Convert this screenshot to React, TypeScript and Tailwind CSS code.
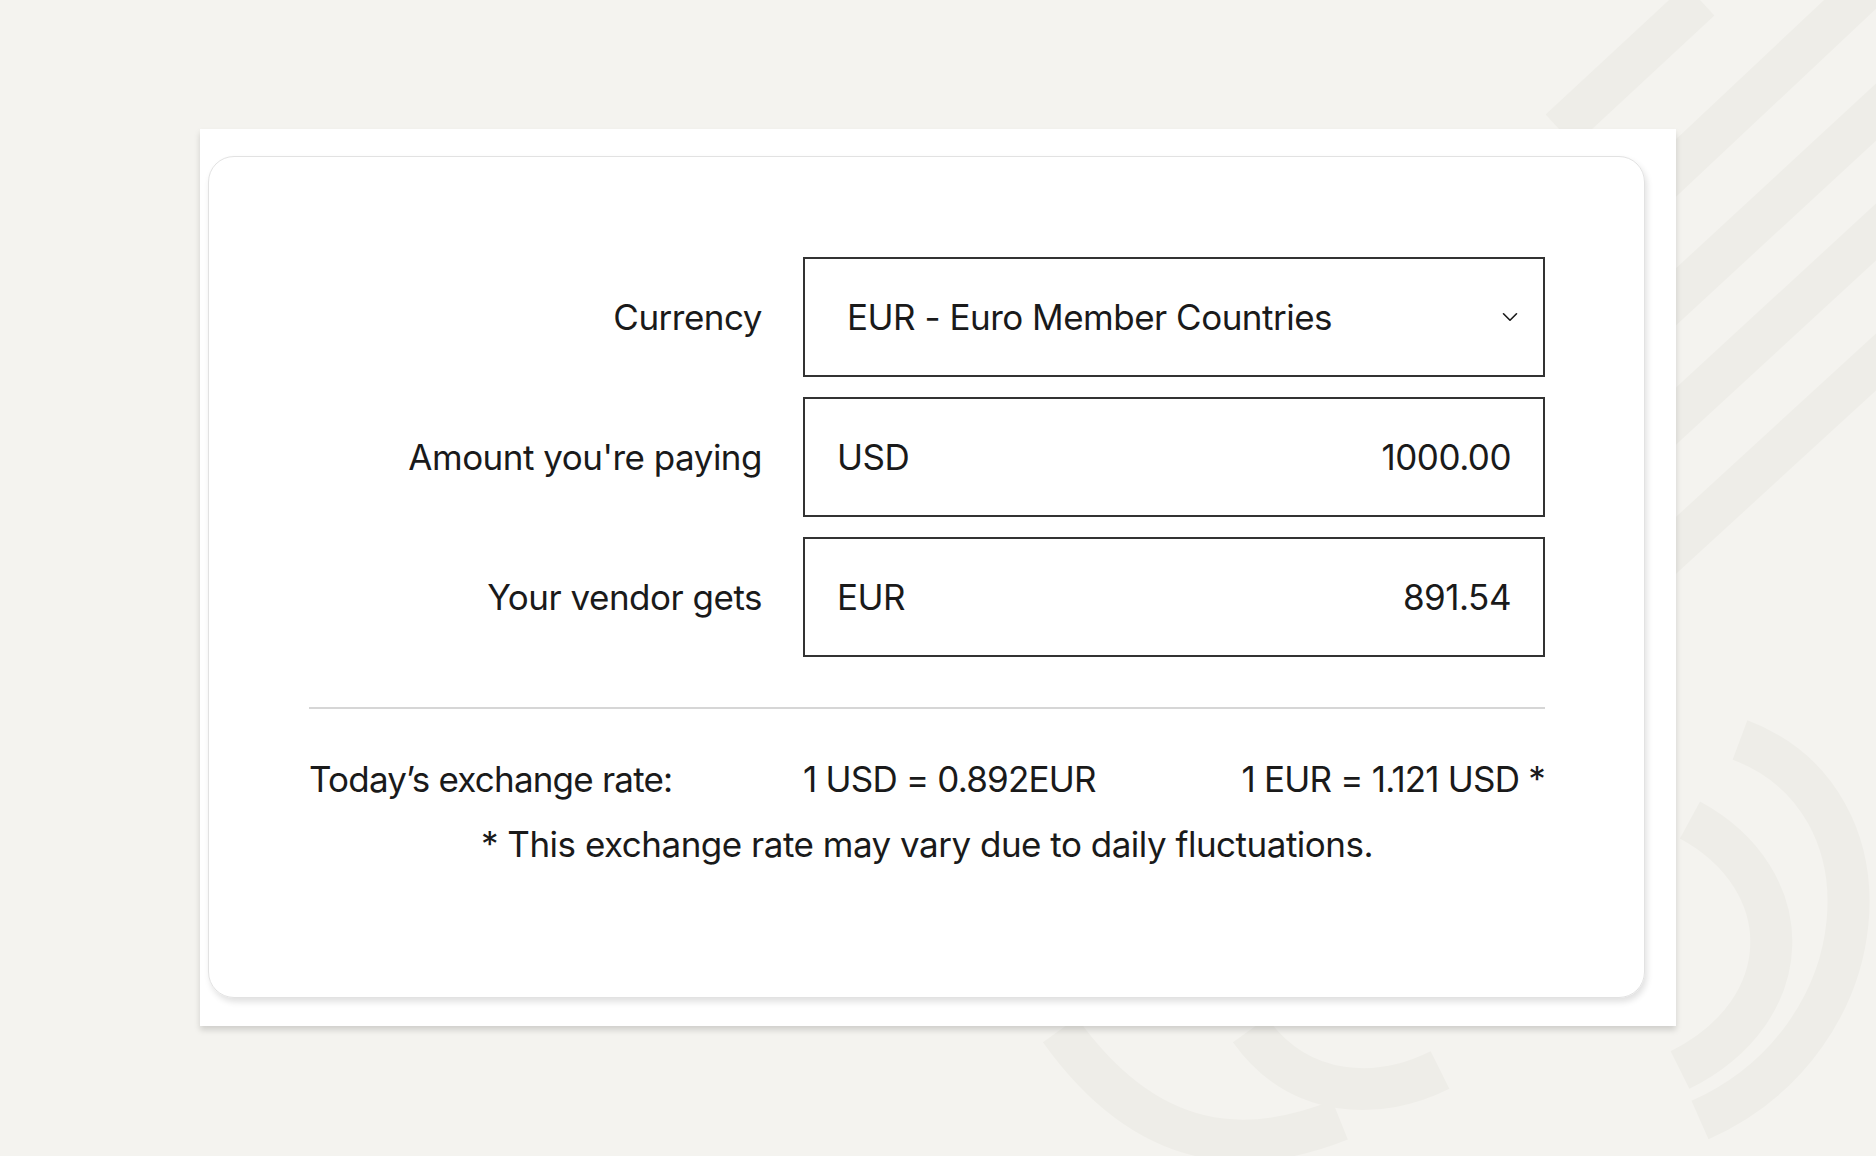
import { ChevronDown } from "lucide-react";

const rows = [
  { label: "Amount you're paying", code: "USD", value: "1000.00" },
  { label: "Your vendor gets", code: "EUR", value: "891.54" },
];

export default function App() {
  return (
    <div
      className="relative w-[1876px] h-[1156px] overflow-hidden bg-[#f4f3ef] text-[#1a1a1a]"
      style={{ fontFamily: "Inter, 'Liberation Sans', sans-serif" }}
    >
      {/* Decorative background stripes */}
      <svg className="absolute inset-0" width="1876" height="1156" viewBox="0 0 1876 1156">
        <g stroke="#eeede8" strokeWidth="42" fill="none">
          <path d="M1560 130 L1700 0" />
          <path d="M1610 230 L1876 -20" />
          <path d="M1640 330 L1900 90" />
          <path d="M1650 440 L1900 210" />
          <path d="M1660 560 L1900 340" />
          <path d="M1740 740 C1900 800 1880 1040 1700 1120" />
          <path d="M1690 820 C1800 880 1800 1010 1680 1070" />
          <path d="M1060 1030 C1150 1156 1250 1156 1340 1120" />
          <path d="M1250 1030 C1300 1100 1380 1100 1440 1070" />
        </g>
      </svg>

      <div className="relative pt-[129px] pl-[200px]">
        <div className="w-[1476px] h-[897px] bg-white shadow-[0_4px_6px_rgba(0,0,0,0.15)] pt-[27px] pl-[8px]">
          <div className="w-[1437px] h-[842px] rounded-[26px] border border-[#e2e2e2] shadow-[2px_4px_6px_rgba(0,0,0,0.12)] pt-[100px] pl-[100px] pr-[99px]">
            <div className="flex flex-col gap-[20px] tracking-[-0.5px]">
              <div className="flex items-center">
                <div className="w-[494px] text-right text-[35px] pr-[41px]">Currency</div>
                <div className="w-[742px] h-[120px] border-2 border-[#333] flex items-center justify-between pl-[42px] pr-[20px] text-[35px]">
                  <span>EUR - Euro Member Countries</span>
                  <ChevronDown className="w-[26px] h-[26px]" strokeWidth={1.5} />
                </div>
              </div>
              {rows.map((r) => (
                <div key={r.code} className="flex items-center">
                  <div className="w-[494px] text-right text-[35px] pr-[41px]">{r.label}</div>
                  <div className="w-[742px] h-[120px] border-2 border-[#333] flex items-center justify-between pl-[32px] pr-[32px] text-[35px]">
                    <span>{r.code}</span>
                    <span>{r.value}</span>
                  </div>
                </div>
              ))}
            </div>
            <div className="mt-[50px] h-[2px] w-[1236px] bg-[#d6d6d6]" />
            <div className="mt-[44px] w-[1236px] flex items-center text-[35px] tracking-[-0.8px]">
              <span className="w-[494px]">Today’s exchange rate:</span>
              <span className="flex-1">1 USD = 0.892EUR</span>
              <span>1 EUR = 1.121 USD *</span>
            </div>
            <div className="mt-[12px] w-[1236px] text-center text-[35px] tracking-[-0.5px]">
              * This exchange rate may vary due to daily fluctuations.
            </div>
          </div>
        </div>
      </div>
    </div>
  );
}
